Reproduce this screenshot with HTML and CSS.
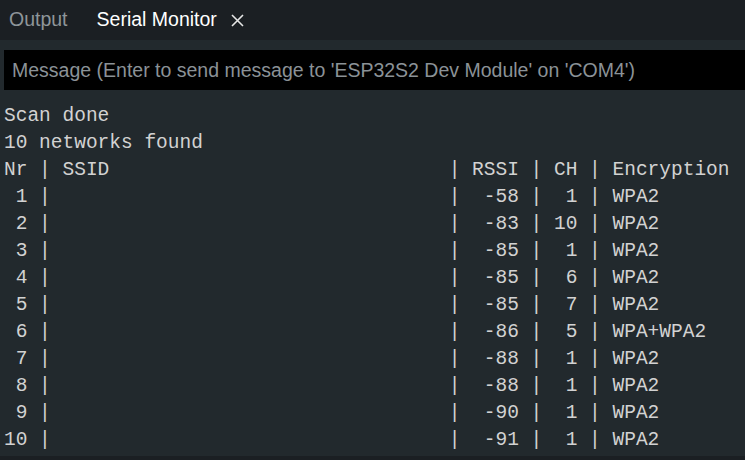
FILE: index.html
```html
<!DOCTYPE html>
<html>
<head>
<meta charset="utf-8">
<link rel="stylesheet" href="styles.css">
</head>
<body>
<div class="app">
  <div class="tabs">
    <div class="tab">Output</div>
    <div class="tab active">Serial Monitor
      <svg class="close" width="13" height="13" viewBox="0 0 13 13"><path d="M1 1L12 12M12 1L1 12" stroke="#e6e6e6" stroke-width="1.6" fill="none"/></svg>
    </div>
  </div>
  <div class="panel">
    <div class="input">Message (Enter to send message to 'ESP32S2 Dev Module' on 'COM4')</div>
<pre class="log">Scan done
10 networks found
Nr | SSID                             | RSSI | CH | Encryption
 1 |                                  |  -58 |  1 | WPA2
 2 |                                  |  -83 | 10 | WPA2
 3 |                                  |  -85 |  1 | WPA2
 4 |                                  |  -85 |  6 | WPA2
 5 |                                  |  -85 |  7 | WPA2
 6 |                                  |  -86 |  5 | WPA+WPA2
 7 |                                  |  -88 |  1 | WPA2
 8 |                                  |  -88 |  1 | WPA2
 9 |                                  |  -90 |  1 | WPA2
10 |                                  |  -91 |  1 | WPA2</pre>
  </div>
  <div class="status"></div>
</div>
</body>
</html>
```
FILE: styles.css
```css
html, body {
  margin: 0;
  padding: 0;
  background: #22292d;
  overflow: hidden;
}
.app {
  width: 745px;
  height: 460px;
  display: flex;
  flex-direction: column;
  overflow: hidden;
}
.tabs {
  height: 40px;
  flex: none;
  background: #1b1f23;
  display: flex;
  align-items: center;
  font-family: "Liberation Sans", Arial, sans-serif;
  font-size: 19.5px;
  padding-left: 9px;
  gap: 29px;
  box-sizing: border-box;
  padding-bottom: 1px;
}
.tab {
  color: #8e959a;
  display: flex;
  align-items: center;
}
.tab.active {
  color: #ffffff;
}
.close {
  margin-left: 14px;
  margin-top: 2px;
}
.panel {
  flex: 1;
  background: #22292d;
  padding: 10px 0 0 4px;
  overflow: hidden;
}
.input {
  height: 40px;
  background: #000000;
  color: #8b9297;
  font-family: "Liberation Sans", Arial, sans-serif;
  font-size: 19.5px;
  line-height: 40px;
  padding-left: 8px;
  white-space: nowrap;
  overflow: hidden;
}
.log {
  margin: 13px 0 0 0;
  font-family: "Liberation Mono", "Courier New", monospace;
  font-size: 19.5px;
  line-height: 27px;
  color: #d2d2d2;
}
.status {
  height: 4px;
  flex: none;
  background: #1b1f23;
}
```
